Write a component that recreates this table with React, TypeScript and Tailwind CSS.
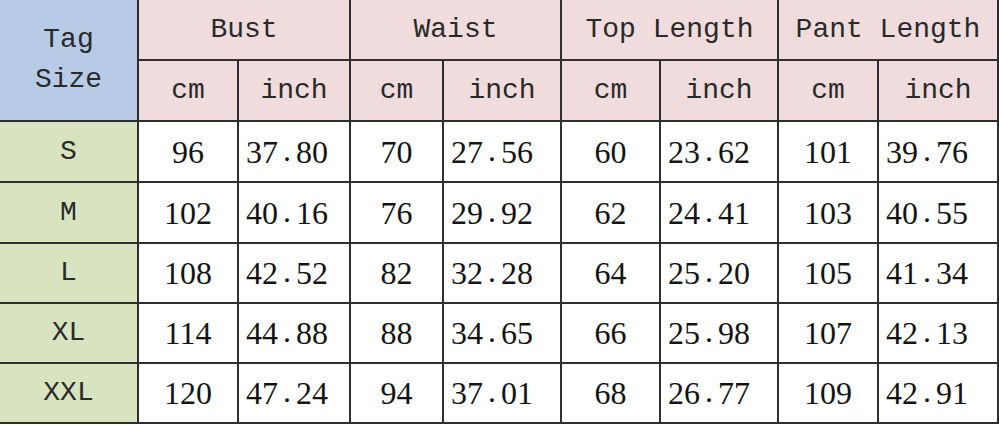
import React from "react";

const rows = [
  { tag: "S", v: ["96", "37.80", "70", "27.56", "60", "23.62", "101", "39.76"] },
  { tag: "M", v: ["102", "40.16", "76", "29.92", "62", "24.41", "103", "40.55"] },
  { tag: "L", v: ["108", "42.52", "82", "32.28", "64", "25.20", "105", "41.34"] },
  { tag: "XL", v: ["114", "44.88", "88", "34.65", "66", "25.98", "107", "42.13"] },
  { tag: "XXL", v: ["120", "47.24", "94", "37.01", "68", "26.77", "109", "42.91"] },
];

const groups = ["Bust", "Waist", "Top Length", "Pant Length"];

const monoCell =
  "flex items-center justify-center text-[28px] text-[#2a2a2a] whitespace-pre font-['Liberation_Mono','Courier_New',monospace]";
const numCell =
  "bg-white flex items-center text-[32px] text-[#141414] font-['Liberation_Serif','Times_New_Roman',serif]";

function Inch({ value }: { value: string }) {
  const [a, b] = value.split(".");
  return (
    <span className="whitespace-nowrap">
      {a}
      <span className="inline-block mx-[5px] -translate-y-[2px]">.</span>
      {b}
    </span>
  );
}

export default function App() {
  return (
    <div className="w-[999px] h-[425px] bg-white overflow-hidden">
      <div className="grid w-[999px] grid-cols-[137px_98px_110px_91px_116px_97px_116px_98px_118px] grid-rows-[59px_59px_59px_59px_58px_58px_58px] gap-[2px] bg-[#2f2f2f] pr-[2px] pb-[2px]">
        <div className={`row-span-2 bg-[#b7cbe6] text-center leading-[40px] ${monoCell}`}>
          Tag
          <br />
          Size
        </div>
        {groups.map((g) => (
          <div key={g} className={`col-span-2 bg-[#f0dcdc] ${monoCell}`}>
            {g}
          </div>
        ))}
        {groups.map((g) => (
          <React.Fragment key={g + "-u"}>
            <div className={`bg-[#f0dcdc] ${monoCell}`}>cm</div>
            <div className={`bg-[#f0dcdc] ${monoCell}`}>inch</div>
          </React.Fragment>
        ))}
        {rows.map((r) => (
          <React.Fragment key={r.tag}>
            <div className={`bg-[#d8e4bf] ${monoCell}`}>{r.tag}</div>
            {r.v.map((val, i) =>
              i % 2 === 0 ? (
                <div key={i} className={`justify-center ${numCell}`}>
                  {val}
                </div>
              ) : (
                <div key={i} className={`justify-start pl-[7px] ${numCell}`}>
                  <Inch value={val} />
                </div>
              )
            )}
          </React.Fragment>
        ))}
      </div>
    </div>
  );
}
